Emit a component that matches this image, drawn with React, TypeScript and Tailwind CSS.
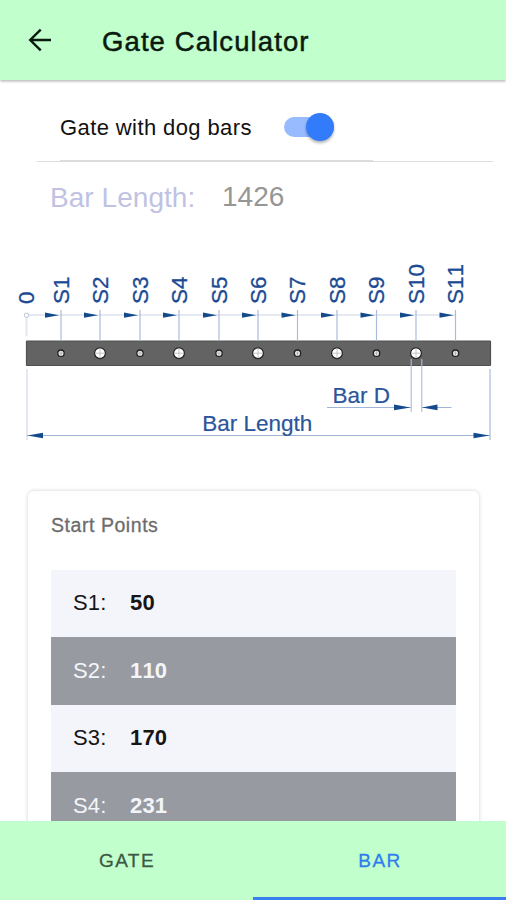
import { useState } from "react";

const stops = [
    { label: "S1", x: 61 },
    { label: "S2", x: 100 },
    { label: "S3", x: 140 },
    { label: "S4", x: 179 },
    { label: "S5", x: 219 },
    { label: "S6", x: 258 },
    { label: "S7", x: 297.5 },
    { label: "S8", x: 337 },
    { label: "S9", x: 376.5 },
    { label: "S10", x: 416 },
    { label: "S11", x: 455.5 },
];

const startPoints = [
    { label: "S1:", value: 50 },
    { label: "S2:", value: 110 },
    { label: "S3:", value: 170 },
    { label: "S4:", value: 231 },
];

function BarDrawing() {
    return (
        <svg
            width="506"
            height="200"
            viewBox="0 250 506 200"
            className="block shrink-0 font-['Liberation_Sans',sans-serif] [font-kerning:none]"
        >
            {/* Running dimension line */}
            <path d="M27 315H455" stroke="#dde2ec" strokeWidth="1.4" />
            <path d="M26.5 318V336" stroke="#e3e7ee" strokeWidth="2" />
            <circle cx="26.5" cy="315.3" r="2.2" fill="#fff" stroke="#b9c4da" strokeWidth="1" />
            <text transform="translate(34 304) rotate(-90)" fontSize="22.5" fill="#1c4a94" stroke="#1c4a94" strokeWidth="0.3">
                0
            </text>

            {/* Bar */}
            <rect x="26.5" y="341" width="464" height="24.5" rx="0.5" fill="#636363" stroke="#505050" strokeWidth="1.2" />

            {stops.map((s, i) => (
                <g key={s.label}>
                    <path d={`M${s.x} 310V341`} stroke="#a9bcdb" strokeWidth="1.2" />
                    <path d={`M${s.x - 16} 312.5L${s.x - 2} 315.2L${s.x - 16} 317.8Z`} fill="#134a8c" />
                    <text
                        transform={`translate(${s.x + 7.5} 304) rotate(-90)`}
                        fontSize="22.5"
                        fill="#1c4a94"
                        stroke="#1c4a94"
                        strokeWidth="0.3"
                    >
                        {s.label}
                    </text>
                    {i % 2 === 0 ? (
                        <>
                            <circle cx={s.x} cy="353.2" r="3.2" fill="#eee" stroke="#222" strokeWidth="1.3" />
                            <path d={`M${s.x - 2} 353.2h4M${s.x} 351.2v4`} stroke="#aaa" strokeWidth="0.8" />
                        </>
                    ) : (
                        <>
                            <circle cx={s.x} cy="353.2" r="5.4" fill="#fff" stroke="#222" strokeWidth="1.2" />
                            <path d={`M${s.x - 5} 353.2h10M${s.x} 348.2v10`} stroke="#b5b5b5" strokeWidth="0.8" />
                        </>
                    )}
                </g>
            ))}

            {/* Hole diameter */}
            <path d="M411.2 359V412M421.8 359V412" stroke="#a9bcdb" strokeWidth="1.1" />
            <path d="M327 407.5H411M422 407.5H451.5" stroke="#9fb4d6" strokeWidth="1" />
            <path d="M394 404.6L410.5 407.5L394 410.2ZM437.5 404.6L422 407.5L437.5 410.2Z" fill="#134a8c" />
            <text x="332.5" y="403" fontSize="22.5" fill="#2b559b" stroke="#2b559b" strokeWidth="0.2">
                Bar D
            </text>

            {/* Overall length */}
            <path d="M27 369V440" stroke="#dde2ec" strokeWidth="1.6" />
            <path d="M490 369V440" stroke="#a9bcdb" strokeWidth="1.2" />
            <path d="M27 435.5H490" stroke="#9fb4d6" strokeWidth="1.1" />
            <path d="M43 432.7L27.5 435.4L43 438.2ZM473.5 432.7L489.5 435.4L473.5 438.2Z" fill="#134a8c" />
            <text x="202.3" y="430.7" fontSize="22.5" fill="#2b559b" stroke="#2b559b" strokeWidth="0.2">
                Bar Length
            </text>
        </svg>
    );
}

export default function App() {
    const [dogBars, setDogBars] = useState(true);
    const [tab, setTab] = useState("bar");

    return (
        <div className="flex h-[900px] w-[506px] flex-col overflow-hidden bg-white font-['Liberation_Sans',sans-serif]">
            {/* Header */}
            <header className="z-10 flex h-20 shrink-0 items-center bg-[#c1ffcc] shadow-[0_1px_3px_rgba(0,0,0,0.35)]">
                <button className="ml-[28px] flex w-[74px]" aria-label="Back">
                    <svg width="24" height="24" viewBox="0 0 24 24" fill="none" stroke="#0b1a0e" strokeWidth="2.4">
                        <path d="M23 12H2M12.7 1.6L2.2 12L12.7 22.4" />
                    </svg>
                </button>
                <h1 className="mt-[3px] text-[27.5px] leading-8 tracking-[1.1px] text-[#0b1a0e] [-webkit-text-stroke:0.5px_#0b1a0e]">
                    Gate Calculator
                </h1>
            </header>

            <main className="flex min-h-0 flex-1 flex-col overflow-hidden">
                {/* Dog bars switch */}
                <div className="ml-[37px] mr-[13px] h-[82px] shrink-0 border-b border-[#dcdcdc]">
                    <div className="ml-[23px] flex h-[81px] w-[313px] items-center border-b border-[#dcdcdc] pt-[14px]">
                        <span className="w-[224px] whitespace-nowrap text-[22px] tracking-[0.4px] text-[#111]">Gate with dog bars</span>
                        <button
                            className={`flex h-5 w-[50px] items-center rounded-full ${dogBars ? "justify-end bg-[#98bbff]" : "justify-start bg-gray-300"}`}
                            onClick={() => setDogBars(!dogBars)}
                            aria-label="Gate with dog bars"
                        >
                            <span className="size-7 shrink-0 rounded-full bg-[#327cfb] shadow-[0_2px_3px_rgba(0,0,0,0.3)]" />
                        </button>
                    </div>
                </div>

                <div className="flex h-[88px] shrink-0 pl-[50px] pt-[15px] text-[28px] leading-10">
                    <span className="w-[172px] pt-px tracking-[0.05px] text-[#bfc2e3]">Bar Length:</span>
                    <span className="text-[#969696]">1426</span>
                </div>

                <BarDrawing />

                {/* Start points */}
                <section className="ml-[28px] mr-[27px] mt-[41px] shrink-0 rounded-md bg-white px-[23px] shadow-[0_0_4px_rgba(0,0,0,0.18)]">
                    <h2 className="h-[78.5px] pt-[20px] text-[19.5px] leading-7 tracking-[0.55px] text-[#6c6c6c] [-webkit-text-stroke:0.3px_#6c6c6c]">
                        Start Points
                    </h2>
                    {startPoints.map((point, i) => (
                        <div
                            key={point.label}
                            className={`flex h-[67.5px] items-center pb-px pl-[22px] text-[22px] [font-kerning:none] ${i % 2 ? "bg-[#989aa2] text-[#f4f5f8]" : "bg-[#f4f5fa] text-[#161616]"}`}
                        >
                            <span className="w-[57px] tracking-[0.2px]">{point.label}</span>
                            <b className="tracking-[0.2px]">{point.value}</b>
                        </div>
                    ))}
                </section>
            </main>

            {/* Tabs */}
            <nav className="z-10 grid h-[79px] shrink-0 grid-cols-2 bg-[#c1ffcc] text-[19px] tracking-[1.4px]">
                <button
                    className={`border-b-[3px] pt-1 pl-px ${tab === "gate" ? "border-[#3880f0] text-[#2f7cf0]" : "border-transparent text-[#3d5844]"} [-webkit-text-stroke:0.3px_currentColor]`}
                    onClick={() => setTab("gate")}
                >
                    GATE
                </button>
                <button
                    className={`border-b-[3px] pt-1 pl-px ${tab === "bar" ? "border-[#3880f0] text-[#2f7cf0]" : "border-transparent text-[#3d5844]"} [-webkit-text-stroke:0.3px_currentColor]`}
                    onClick={() => setTab("bar")}
                >
                    BAR
                </button>
            </nav>
        </div>
    );
}
